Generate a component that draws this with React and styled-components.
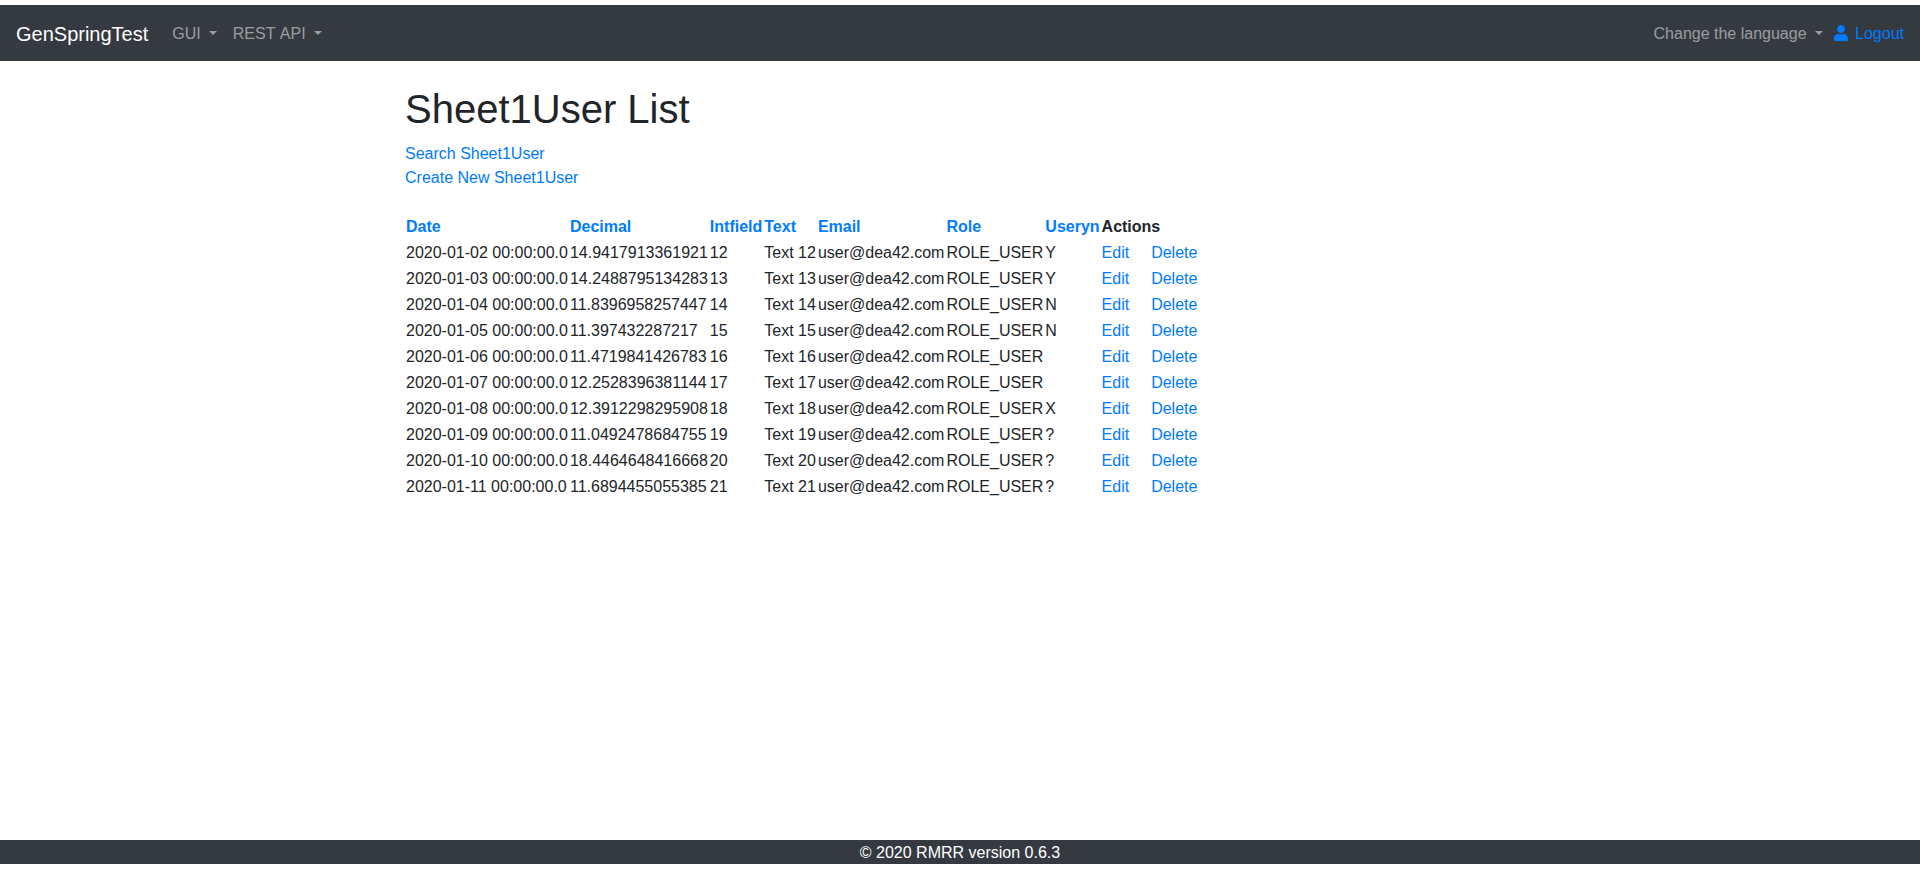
import React from 'react';
import styled, { createGlobalStyle } from 'styled-components';
import { FaUser } from 'react-icons/fa';

const GlobalStyle = createGlobalStyle`
  * {
    box-sizing: border-box;
  }
  body {
    margin: 0;
    background: #fff;
    color: #212529;
    font-family: "Liberation Sans", Arial, sans-serif;
    font-size: 16px;
    line-height: 1.5;
  }
`;

const Page = styled.div`
  display: flex;
  flex-direction: column;
  min-height: 874px;
  padding: 5px 0 10px;
`;

const Navbar = styled.nav`
  display: flex;
  align-items: center;
  justify-content: space-between;
  height: 56px;
  padding: 8px 16px;
  background: #343a40;
`;

const NavGroup = styled.div`
  display: flex;
  align-items: center;
`;

const Brand = styled.a`
  margin-right: 16px;
  padding-top: 2px;
  color: #fff;
  font-size: 20px;
  line-height: 30px;
`;

const NavLink = styled.a`
  padding: 9px 8px 7px;
  color: rgba(255, 255, 255, 0.5);
  font-kerning: none;

  &::after {
    content: '';
    display: inline-block;
    margin-left: 8px;
    vertical-align: 0.255em;
    border-top: 0.3em solid;
    border-right: 4.6px solid transparent;
    border-left: 4.6px solid transparent;
  }
`;

const Logout = styled.a`
  display: flex;
  align-items: center;
  gap: 7.5px;
  margin-left: 3px;
  color: #007bff;

  svg {
    width: 14px;
    height: 16px;
  }
`;

const LogoutLabel = styled.span`
  padding-top: 2px;
`;

const Main = styled.main`
  flex: 1;
  width: 1140px;
  margin: 0 auto;
  padding: 24px 15px 0;
`;

const Title = styled.h1`
  margin: 0 0 8px;
  font-size: 40px;
  font-weight: 500;
  line-height: 1.2;
`;

const ActionRow = styled.div`
  height: 24px;
  padding-top: 1px;
`;

const Link = styled.a`
  color: #007bff;
`;

const Table = styled.table`
  margin-top: 24px;
  border-collapse: separate;
  border-spacing: 0;
`;

const Th = styled.th`
  padding: 2px 1px 0;
  font-weight: 700;
  text-align: left;
  white-space: nowrap;
`;

const Td = styled.td`
  padding: 2px 1px 0;
  white-space: nowrap;
`;

const ActionCell = styled(Td)`
  padding-right: ${(p) => (p.$last ? '1px' : '21px')};
`;

const Footer = styled.footer`
  height: 24px;
  padding-top: 1px;
  background: #343a40;
  color: #fff;
  text-align: center;
`;

const columns = ['Date', 'Decimal', 'Intfield', 'Text', 'Email', 'Role', 'Useryn'];

const rows = [
  ['2020-01-02 00:00:00.0', '14.9417913361921', '12', 'Text 12', 'Y'],
  ['2020-01-03 00:00:00.0', '14.2488795134283', '13', 'Text 13', 'Y'],
  ['2020-01-04 00:00:00.0', '11.8396958257447', '14', 'Text 14', 'N'],
  ['2020-01-05 00:00:00.0', '11.397432287217', '15', 'Text 15', 'N'],
  ['2020-01-06 00:00:00.0', '11.4719841426783', '16', 'Text 16', ''],
  ['2020-01-07 00:00:00.0', '12.2528396381144', '17', 'Text 17', ''],
  ['2020-01-08 00:00:00.0', '12.3912298295908', '18', 'Text 18', 'X'],
  ['2020-01-09 00:00:00.0', '11.0492478684755', '19', 'Text 19', '?'],
  ['2020-01-10 00:00:00.0', '18.4464648416668', '20', 'Text 20', '?'],
  ['2020-01-11 00:00:00.0', '11.6894455055385', '21', 'Text 21', '?'],
];

const App = () => (
  <Page>
    <GlobalStyle />
    <Navbar>
      <NavGroup>
        <Brand>GenSpringTest</Brand>
        <NavLink>GUI</NavLink>
        <NavLink>REST API</NavLink>
      </NavGroup>
      <NavGroup>
        <NavLink>Change the language</NavLink>
        <Logout>
          <FaUser />
          <LogoutLabel>Logout</LogoutLabel>
        </Logout>
      </NavGroup>
    </Navbar>
    <Main>
      <Title>Sheet1User List</Title>
      <ActionRow><Link>Search Sheet1User</Link></ActionRow>
      <ActionRow><Link>Create New Sheet1User</Link></ActionRow>
      <Table>
        <thead>
          <tr>
            {columns.map((c) => (
              <Th key={c}><Link>{c}</Link></Th>
            ))}
            <Th colSpan={2}>Actions</Th>
          </tr>
        </thead>
        <tbody>
          {rows.map(([date, decimal, intfield, text, useryn]) => (
            <tr key={date}>
              <Td>{date}</Td>
              <Td>{decimal}</Td>
              <Td>{intfield}</Td>
              <Td>{text}</Td>
              <Td>user@dea42.com</Td>
              <Td>ROLE_USER</Td>
              <Td>{useryn}</Td>
              <ActionCell><Link>Edit</Link></ActionCell>
              <ActionCell $last><Link>Delete</Link></ActionCell>
            </tr>
          ))}
        </tbody>
      </Table>
    </Main>
    <Footer>© 2020 RMRR version 0.6.3</Footer>
  </Page>
);

export default App;
